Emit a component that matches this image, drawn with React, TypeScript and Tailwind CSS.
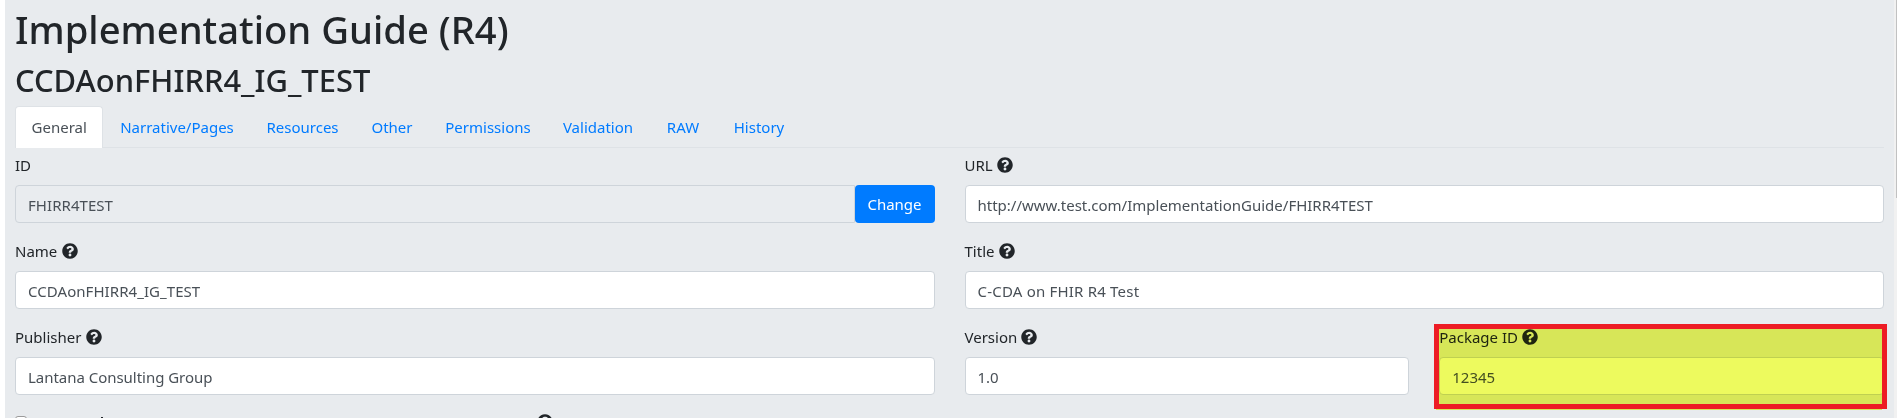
import { FaQuestionCircle } from "react-icons/fa";
import { clsx } from "clsx";

const tabs = [
  { label: "General", width: "w-[87.5px]" },
  { label: "Narrative/Pages", width: "w-[146px]" },
  { label: "Resources", width: "w-[105px]" },
  { label: "Other", width: "w-[74px]" },
  { label: "Permissions", width: "w-[118px]" },
  { label: "Validation", width: "w-[102px]" },
  { label: "RAW", width: "w-[68px]" },
  { label: "History", width: "w-[84px]" },
];

function Label({ text, help = true }: { text: string; help?: boolean }) {
  return (
    <div className="mb-2 flex h-6 items-center gap-[4.2px] whitespace-nowrap">
      <span>{text}</span>
      {help && <FaQuestionCircle className="size-4" />}
    </div>
  );
}

function Field({ value, className, textClass }: { value: string; className?: string; textClass?: string }) {
  return (
    <div
      className={clsx(
        "flex h-[38px] items-center border border-[#ced4da] px-3 pt-px text-[#495057]",
        className ?? "rounded bg-white",
      )}
    >
      <span className={textClass}>{value}</span>
    </div>
  );
}

export default function App() {
  return (
    <div className="flex h-[418px] overflow-hidden bg-white pl-[5px] font-['Noto_Sans',sans-serif] text-[15px] leading-6 text-[#212529]">
      <main className="min-w-0 flex-1 bg-[#e8ebee] px-2.5 pt-1">
        <h1 className="mb-2 h-12 pt-px text-[38.2px] leading-[48px] font-medium whitespace-nowrap">
          Implementation Guide (R4)
        </h1>
        <h2 className="mb-2 h-[38.4px] pt-px text-[30.9px] leading-[38.4px] font-medium whitespace-nowrap">
          CCDAonFHIRR4_IG_TEST
        </h2>
        <nav className="flex h-[42px] border-b border-[#dee2e6]">
          {tabs.map((t, i) => (
            <a
              key={t.label}
              className={clsx(
                "flex h-[42px] items-center justify-center rounded-t border border-b-0 pb-0.5 whitespace-nowrap",
                t.width,
                i === 0 ? "border-[#dee2e6] bg-white pl-px text-[#495057]" : "border-transparent pl-[3px] text-[#007bff]",
              )}
            >
              {t.label}
            </a>
          ))}
        </nav>
        <div className="grid grid-cols-2 gap-x-[30px] gap-y-4 pt-[5px]">
          <div>
            <Label text="ID" help={false} />
            <div className="flex">
              <Field value="FHIRR4TEST" className="flex-1 rounded-l bg-[#e9ecef]" textClass="tracking-[0.05px]" />
              <button className="h-[38px] w-20 rounded bg-[#007bff] text-white">Change</button>
            </div>
          </div>
          <div>
            <Label text="URL" />
            <Field value="http://www.test.com/ImplementationGuide/FHIRR4TEST" />
          </div>
          <div>
            <Label text="Name" />
            <Field value="CCDAonFHIRR4_IG_TEST" textClass="tracking-[0.06px]" />
          </div>
          <div>
            <Label text="Title" />
            <Field value="C-CDA on FHIR R4 Test" textClass="tracking-[0.2px]" />
          </div>
          <div>
            <Label text="Publisher" />
            <Field value="Lantana Consulting Group" textClass="tracking-[-0.03px]" />
          </div>
          <div className="grid grid-cols-2 gap-x-[30px]">
            <div>
              <Label text="Version" />
              <Field value="1.0" />
            </div>
            <div className="relative">
              <Label text="Package ID" />
              <Field value="12345" />
              <div className="absolute -top-px right-0.5 -left-[3px] h-[86px] bg-[#edfa5e] mix-blend-multiply" />
              <div className="absolute -top-px -right-[3px] -left-[5px] h-[85px] border-[5px] border-[#ed1c24]" />
            </div>
          </div>
        </div>
        {/* Next form row, cut off by the bottom of the viewport */}
        <div className="mt-[19px] flex h-4 items-start">
          <span className="mt-[1.6px] size-3 shrink-0 rounded-[3px] border border-[#9a9a9a] bg-white" />
          <span className="mt-[2.6px] ml-[74px] h-3 w-[1.5px] shrink-0 bg-[#212529]" />
          <FaQuestionCircle className="ml-[434.5px] size-4 shrink-0" />
        </div>
      </main>
      <div className="w-[3px] shrink-0 bg-[#f1f1f1] pl-[2px]">
        <div className="h-[198px] bg-[#c1c1c1]" />
      </div>
    </div>
  );
}
